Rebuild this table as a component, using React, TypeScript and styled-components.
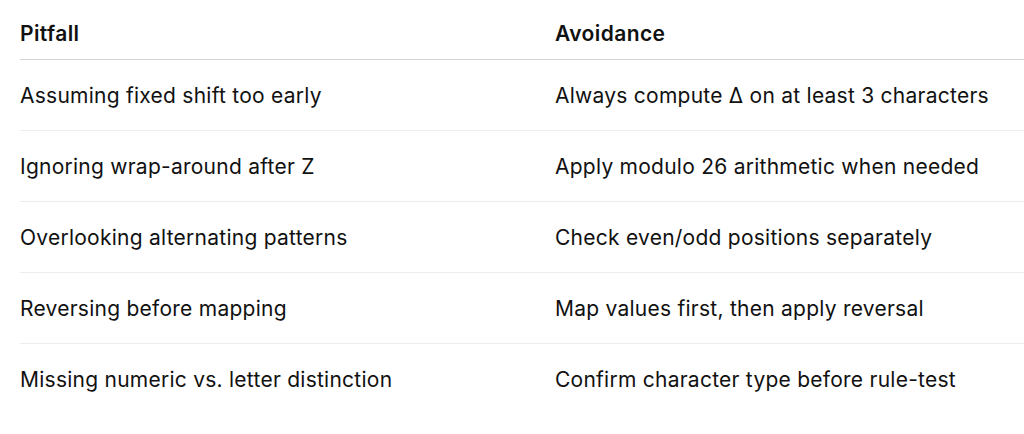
import React from "react";
import styled, { createGlobalStyle } from "styled-components";

const Global = createGlobalStyle`
  html, body { margin: 0; padding: 0; background: #ffffff; overflow: hidden; }
  body { font-family: Inter, "Noto Sans", sans-serif; color: #111111; }
`;

const Table = styled.div`
  margin-left: 20px;
  width: 1020px;
  display: flex;
  flex-direction: column;
`;

const HeaderRow = styled.div`
  display: grid;
  grid-template-columns: 535px 1fr;
  height: 60px;
  align-items: center;
  border-bottom: 1px solid #d4d4d4;
  box-sizing: border-box;
  padding-top: 7px;
`;

const Row = styled.div<{ $last?: boolean }>`
  display: grid;
  grid-template-columns: 535px 1fr;
  height: 71px;
  align-items: center;
  border-bottom: ${(p) => (p.$last ? "none" : "1px solid #ececec")};
  box-sizing: border-box;
`;

const HeadCell = styled.div`
  font-size: 21px;
  font-weight: 600;
  letter-spacing: 0.4px;
`;

const Cell = styled.div`
  font-size: 21px;
  font-weight: 400;
  letter-spacing: 0.25px;
`;

const rows: [string, string][] = [
  ["Assuming fixed shift too early", "Always compute Δ on at least 3 characters"],
  ["Ignoring wrap-around after Z", "Apply modulo 26 arithmetic when needed"],
  ["Overlooking alternating patterns", "Check even/odd positions separately"],
  ["Reversing before mapping", "Map values first, then apply reversal"],
  ["Missing numeric vs. letter distinction", "Confirm character type before rule-test"],
];

export default function App() {
  return (
    <>
      <Global />
      <Table>
        <HeaderRow>
          <HeadCell>Pitfall</HeadCell>
          <HeadCell>Avoidance</HeadCell>
        </HeaderRow>
        {rows.map(([a, b], i) => (
          <Row key={i} $last={i === rows.length - 1}>
            <Cell>{a}</Cell>
            <Cell>{b}</Cell>
          </Row>
        ))}
      </Table>
    </>
  );
}
